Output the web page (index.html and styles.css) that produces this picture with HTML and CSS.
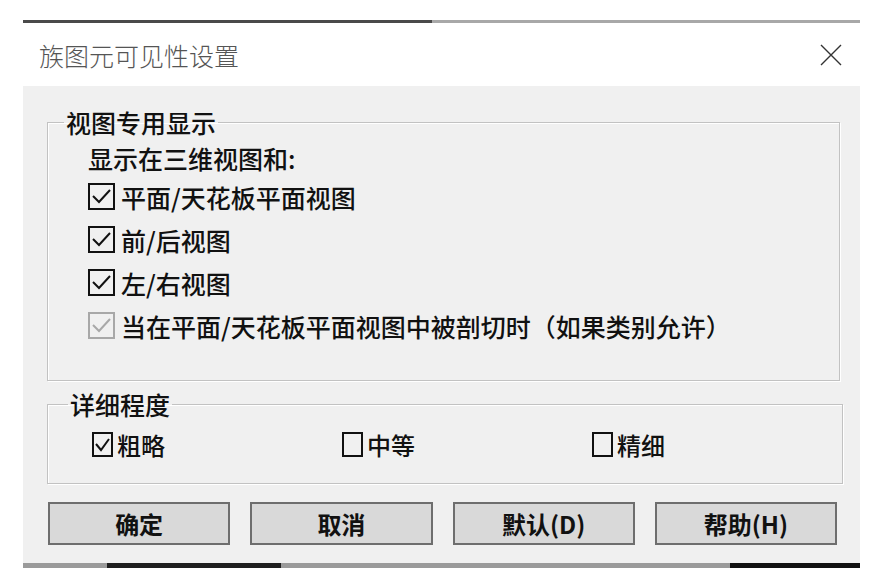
FILE: index.html
```html
<!DOCTYPE html>
<html lang="zh-CN">
<head>
    <meta charset="UTF-8">
    <title>族图元可见性设置</title>
    <link rel="stylesheet" href="styles.css">
</head>
<body>
    <div class="dialog">
        <div class="top-edge"></div>
        <div class="titlebar">
            <span class="title">族图元可见性设置</span>
            <svg class="close" width="24" height="24" viewBox="0 0 24 24">
                <path d="M2 2 L22 22 M22 2 L2 22" stroke="#333" stroke-width="1.4" fill="none"/>
            </svg>
        </div>

        <div class="content">
            <fieldset class="group view-group">
                <legend>视图专用显示</legend>
                <div class="caption">显示在三维视图和:</div>
                <label class="check">
                    <svg class="box" viewBox="0 0 27 27"><rect x="1" y="1" width="25" height="25"/><polyline points="5,13 11,19 22,7"/></svg>
                    平面/天花板平面视图
                </label>
                <label class="check">
                    <svg class="box" viewBox="0 0 27 27"><rect x="1" y="1" width="25" height="25"/><polyline points="5,13 11,19 22,7"/></svg>
                    前/后视图
                </label>
                <label class="check">
                    <svg class="box" viewBox="0 0 27 27"><rect x="1" y="1" width="25" height="25"/><polyline points="5,13 11,19 22,7"/></svg>
                    左/右视图
                </label>
                <label class="check disabled">
                    <svg class="box" viewBox="0 0 27 27"><rect x="1" y="1" width="25" height="25"/><polyline points="5,13 11,19 22,7"/></svg>
                    当在平面/天花板平面视图中被剖切时（如果类别允许）
                </label>
            </fieldset>

            <fieldset class="group detail-group">
                <legend>详细程度</legend>
                <div class="detail-row">
                    <label class="check small">
                        <svg class="box" viewBox="0 0 21 25"><rect x="1" y="1" width="19" height="23"/><polyline points="4,12 9,18 17,7"/></svg>
                        粗略
                    </label>
                    <label class="check small">
                        <svg class="box" viewBox="0 0 21 25"><rect x="1" y="1" width="19" height="23"/></svg>
                        中等
                    </label>
                    <label class="check small">
                        <svg class="box" viewBox="0 0 21 25"><rect x="1" y="1" width="19" height="23"/></svg>
                        精细
                    </label>
                </div>
            </fieldset>

            <div class="buttons">
                <button>确定</button>
                <button>取消</button>
                <button>默认(D)</button>
                <button>帮助(H)</button>
            </div>
        </div>
        <div class="bottom-edge"></div>
    </div>
</body>
</html>
```

FILE: styles.css
```css
body {
    margin: 0;
    background: #fff;
    font-family: "Noto Sans CJK SC", "Noto Sans", sans-serif;
    color: #111;
}
.dialog {
    width: 837px;
    margin: 20px 0 0 23px;
}
.top-edge {
    height: 3px;
    background: linear-gradient(to right, #4a4a4a 0 409px, #a8a8a8 409px);
}
.titlebar {
    height: 63px;
    background: #fff;
    display: flex;
    align-items: center;
    justify-content: space-between;
    padding: 0 17px 0 16px;
}
.title {
    font-size: 25px;
    font-weight: 300;
    color: #555;
}
.close {
    display: block;
}
.content {
    background: #f0f0f0;
    padding: 21px 20px 18px 24px;
}
.group {
    margin: 0;
    border: 1px solid #c2c2c2;
    box-shadow: inset 1px 1px 0 #fff, 1px 1px 0 #fff;
    padding: 4px 0 0 40px;
}
.group legend {
    font-size: 25px;
    line-height: 30px;
    padding: 0 2px;
    margin-left: -24px;
    font-weight: 500;
}
.view-group {
    padding-bottom: 33px;
}
.caption {
    font-size: 25px;
    line-height: 34px;
    font-weight: 500;
}
.check {
    display: flex;
    align-items: center;
    gap: 6px;
    height: 43px;
    font-size: 25px;
    font-weight: 500;
}
.check .box {
    width: 27px;
    height: 27px;
    flex: none;
}
.check .box rect {
    fill: #fff;
    fill-opacity: 0;
    stroke: #111;
    stroke-width: 2;
}
.check .box polyline {
    fill: none;
    stroke: #111;
    stroke-width: 2;
}
.check.disabled .box rect,
.check.disabled .box polyline {
    stroke: #a8a8a8;
}
.detail-group {
    margin-top: 8px;
    padding: 0 0 14px 44px;
}
.detail-row {
    display: grid;
    grid-template-columns: 250px 250px 250px;
}
.check.small {
    gap: 4px;
    height: 50px;
    font-size: 24px;
}
.check.small .box {
    width: 21px;
    height: 25px;
}
.buttons {
    display: flex;
    gap: 20px;
    margin: 18px 3px 0 1px;
}
.buttons button {
    flex: 1;
    height: 43px;
    background: #d9d9d9;
    border: 2px solid #6e6e6e;
    font-family: inherit;
    font-size: 24px;
    font-weight: 700;
    color: #111;
    padding: 0;
}
.bottom-edge {
    height: 5px;
    background: linear-gradient(to right, #9a9a9a 0 84px, #1e1e1e 84px 258px, #9a9a9a 258px 707px, #111 707px);
}
```
